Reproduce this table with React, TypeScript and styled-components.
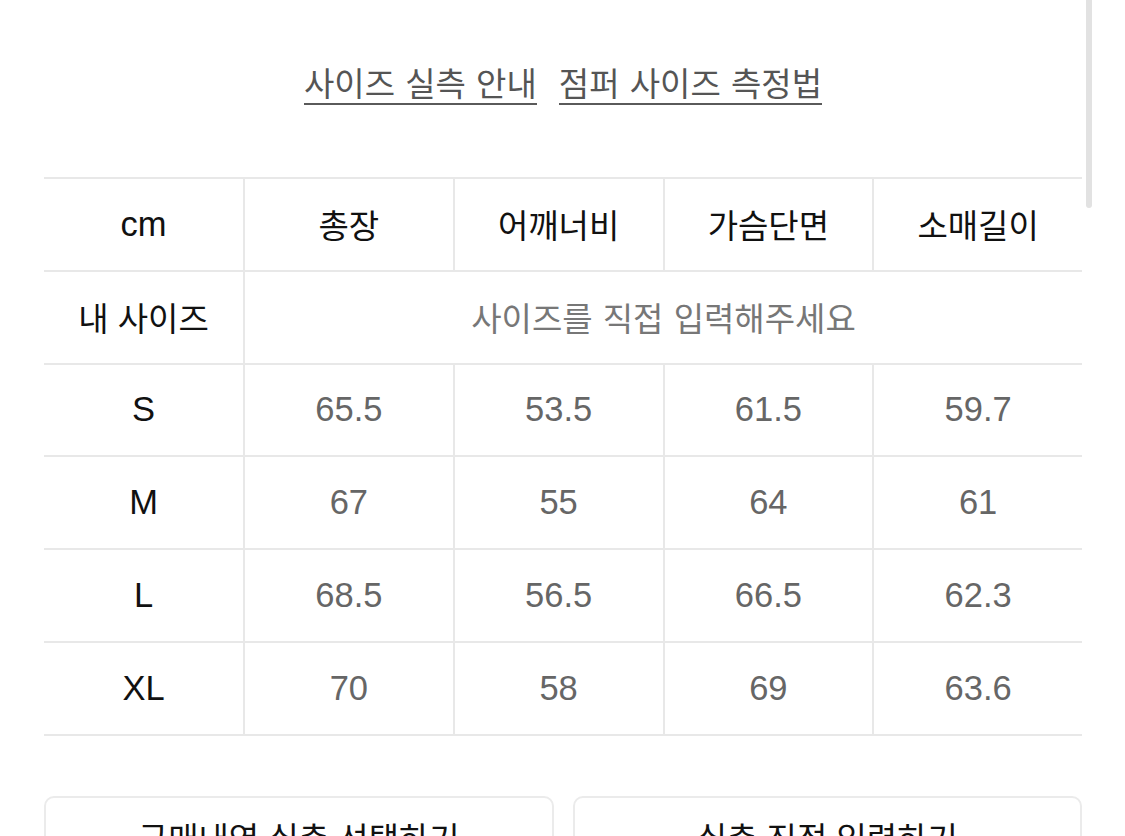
import React from "react";
import styled, { createGlobalStyle } from "styled-components";

const Global = createGlobalStyle`
  html, body { margin: 0; padding: 0; background: #fff; }
  body {
    font-family: "Liberation Sans", "Noto Sans CJK KR", sans-serif;
    overflow: hidden;
  }
`;

const Page = styled.div`
  position: relative;
  width: 1125px;
  height: 836px;
  overflow: hidden;
  padding: 67px 43px 0 44px;
  box-sizing: border-box;
`;

const Scrollbar = styled.div`
  position: absolute;
  top: 0;
  left: 1086px;
  width: 6px;
  height: 208px;
  border-radius: 0 0 3px 3px;
  background: #e2e2e2;
`;

const LinkRow = styled.nav`
  display: flex;
  justify-content: center;
  gap: 22px;
`;

const Link = styled.a`
  display: inline-block;
  font-size: 33px;
  line-height: 36px;
  color: #555;
  text-decoration: none;
  border-bottom: 2px solid #5a5a5a;
  word-spacing: 1px;
  cursor: pointer;
`;

const Table = styled.div`
  margin-top: 72px;
  display: grid;
  grid-template-columns: 199px repeat(4, 1fr);
  width: 1038px;
  border-top: 2px solid #e8e8e8;
`;

const Cell = styled.div<{ $head?: boolean; $span?: number; $first?: boolean; $latin?: boolean }>`
  height: 90.8px;
  display: flex;
  align-items: center;
  justify-content: center;
  border-bottom: 2px solid #e8e8e8;
  border-left: ${(p) => (p.$first ? "none" : "2px solid #e8e8e8")};
  grid-column: ${(p) => (p.$span ? `span ${p.$span}` : "auto")};
  font-size: ${(p) => (p.$latin ? "34.5px" : "33px")};
  color: ${(p) => (p.$head ? "#111" : "#666")};
`;

const Placeholder = styled.span`
  color: #777;
  word-spacing: 1px;
`;

const ButtonRow = styled.div`
  margin-top: 60px;
  display: grid;
  grid-template-columns: 1fr 1fr;
  gap: 19px;
  width: 1038px;
`;

const Button = styled.button`
  height: 90px;
  border: 2px solid #ebebeb;
  border-radius: 10px;
  background: #fff;
  font-family: inherit;
  font-size: 33px;
  color: #111;
  padding: 24px 0 0;
  display: flex;
  justify-content: center;
  align-items: flex-start;
  line-height: 36px;
`;

const headers = ["총장", "어깨너비", "가슴단면", "소매길이"];
const rows: [string, string[]][] = [
  ["S", ["65.5", "53.5", "61.5", "59.7"]],
  ["M", ["67", "55", "64", "61"]],
  ["L", ["68.5", "56.5", "66.5", "62.3"]],
  ["XL", ["70", "58", "69", "63.6"]],
];

export default function App() {
  return (
    <>
      <Global />
      <Page>
        <LinkRow>
          <Link>사이즈 실측 안내</Link>
          <Link>점퍼 사이즈 측정법</Link>
        </LinkRow>
        <Table>
          <Cell $head $first $latin>cm</Cell>
          {headers.map((h) => (
            <Cell $head key={h}>{h}</Cell>
          ))}
          <Cell $head $first>내 사이즈</Cell>
          <Cell $span={4}>
            <Placeholder>사이즈를 직접 입력해주세요</Placeholder>
          </Cell>
          {rows.map(([size, vals]) => (
            <React.Fragment key={size}>
              <Cell $head $first $latin>{size}</Cell>
              {vals.map((v, i) => (
                <Cell $latin key={i}>{v}</Cell>
              ))}
            </React.Fragment>
          ))}
        </Table>
        <ButtonRow>
          <Button>구매내역 실측 선택하기</Button>
          <Button>실측 직접 입력하기</Button>
        </ButtonRow>
        <Scrollbar />
      </Page>
    </>
  );
}
